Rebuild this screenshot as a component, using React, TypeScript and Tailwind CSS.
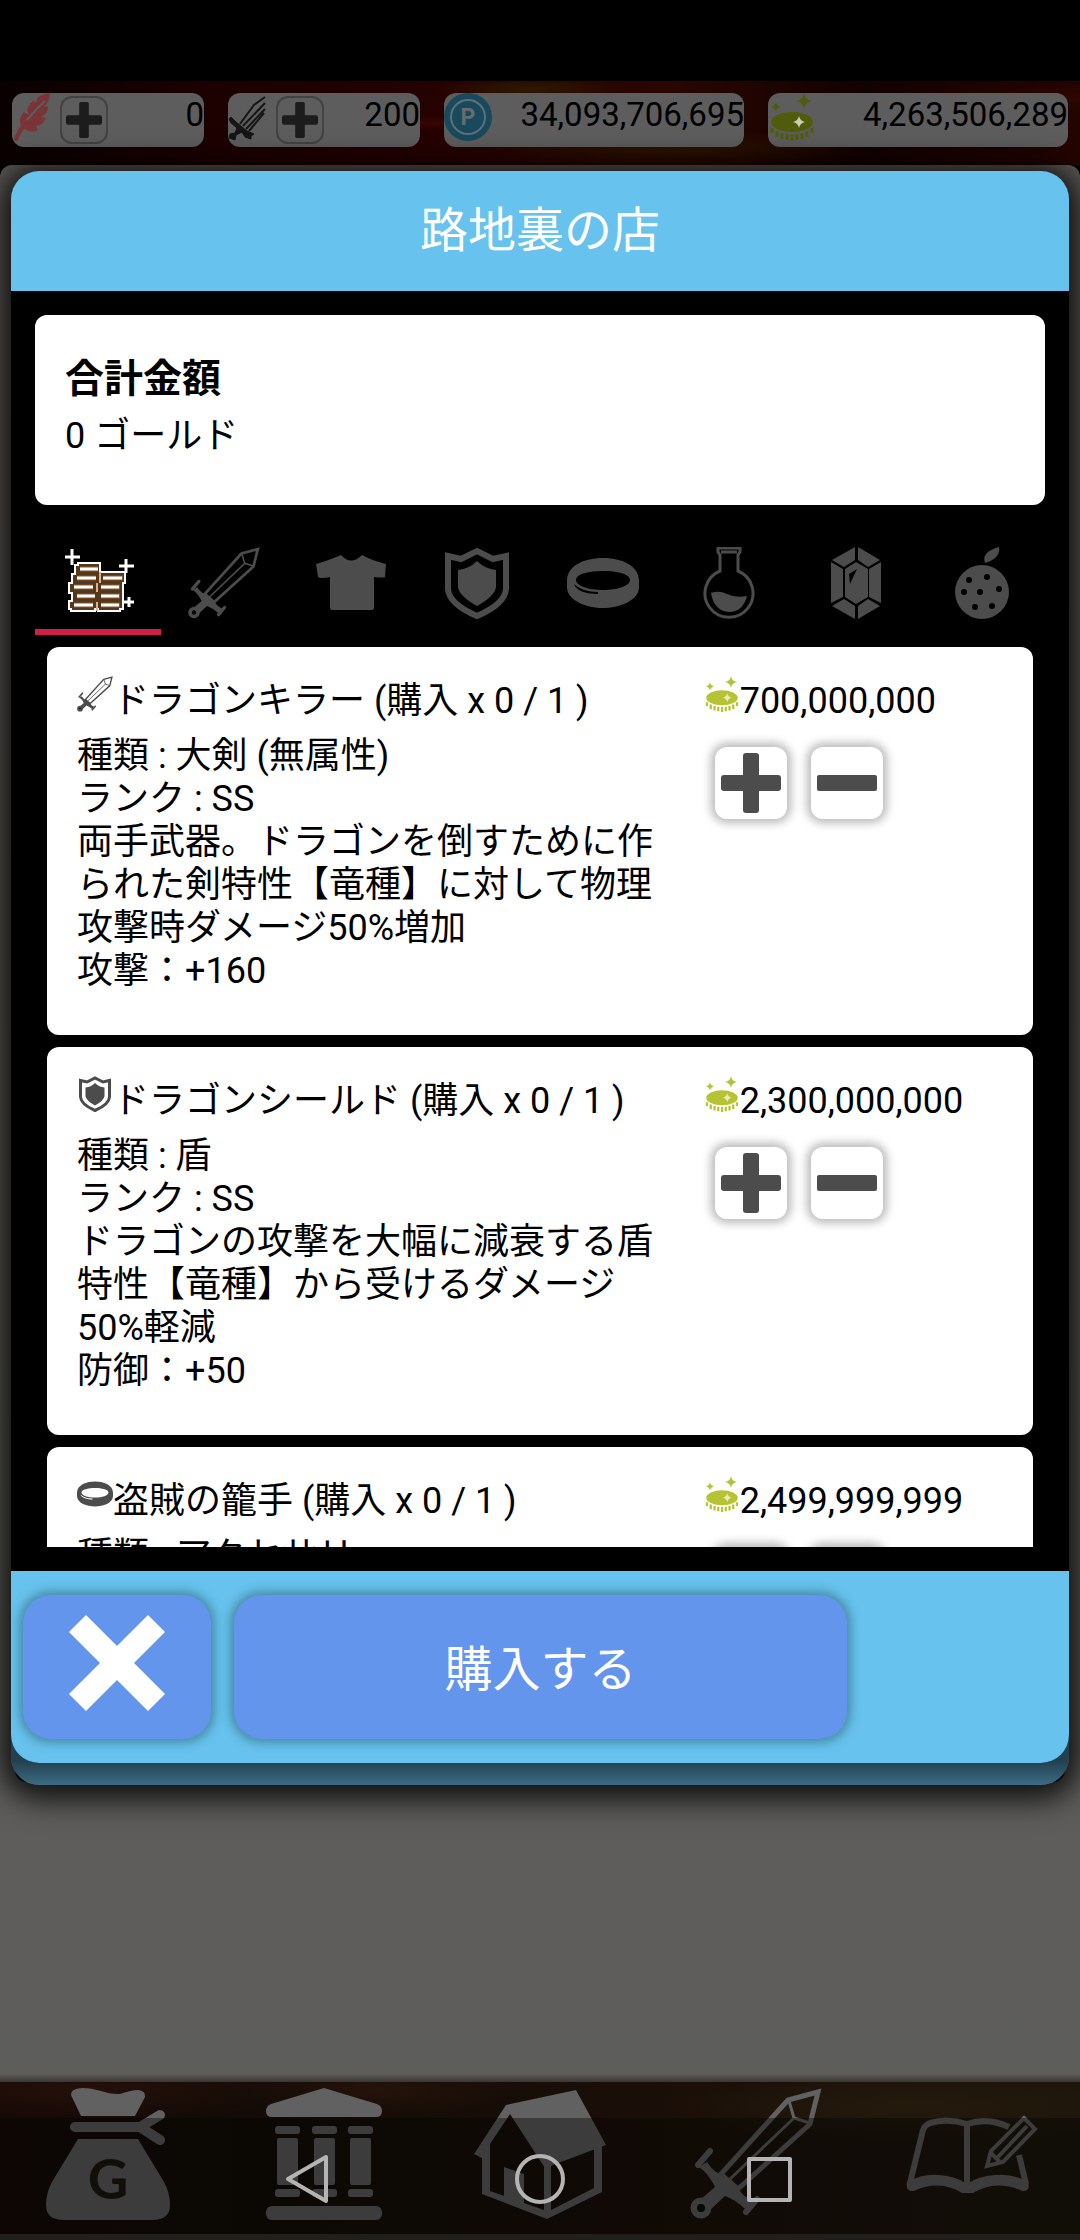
import { useState } from 'react'
import type { ReactNode } from 'react'

type IconProps = { className?: string }

const SwordIcon = ({ className }: IconProps) => (
	<svg viewBox="0 0 132 132" fill="none" stroke="currentColor" className={className}>
		<path d="M128 4 98 12 31 86 48 101 120 36Z" strokeWidth="5" />
		<path d="M99 13 104 30 120 35M104 30 38 93" strokeWidth="3" />
		<path
			d="M17 74Q24 85 33 87L49 101Q53 109 63 113L55 121Q46 112 35 108L20 122 10 112 25 99Q18 85 9 79Z"
			fill="currentColor"
			stroke="none"
		/>
		<path d="M20 63 8 77M67 111 56 124" strokeWidth="6" strokeLinecap="round" />
		<circle cx="11" cy="120" r="7" strokeWidth="7" />
		<circle cx="11" cy="120" r="4" fill="#0b0906" stroke="none" />
	</svg>
)

const DarkSwordIcon = ({ className }: IconProps) => (
	<svg viewBox="0 0 38 48" fill="none" stroke="currentColor" className={className}>
		<path d="M37 4 26 12 12 31M37 10 15 33M37 16 18 36M36 20 21 38" strokeWidth="2" />
		<path
			d="M3 24 8 29 19 38 26 41 23 43 23 46 17 44 14 39 8 42 7 47 1 45 2 41 7 40 9 35 3 30 1 26Z"
			fill="currentColor"
		/>
	</svg>
)

const ShirtIcon = ({ className }: IconProps) => (
	<svg viewBox="0 0 72 72" fill="currentColor" className={className}>
		<path d="M1 17Q12 14 26 8Q36 19 47 8Q58 14 71 17L70 30Q69 31 59 30V61Q59 63 57 63H17Q15 63 15 61V30Q5 32 3 30Z" />
	</svg>
)

const ShieldIcon = ({ className }: IconProps) => (
	<svg viewBox="0 0 72 72" fill="none" stroke="currentColor" className={className}>
		<path d="M7 9 20 12 36 4 52 12 65 9V42Q64 57 36 69Q8 57 7 42Z" strokeWidth="6" />
		<path d="M17 23Q28 22 36 14Q44 22 55 23V40Q54 49 36 59Q18 49 17 40Z" fill="currentColor" stroke="none" />
	</svg>
)

const RingIcon = ({ className }: IconProps) => (
	<svg viewBox="0 0 72 72" fill="currentColor" className={className}>
		<path
			fillRule="evenodd"
			d="M0 34C0 17 20 11 36 11S72 17 72 34V40C72 54 52 61 36 61S0 54 0 40ZM9 33C9 39 22 43 36 43S63 39 63 33 50 24 36 24 9 27 9 33ZM7 37C9 44 20 47 31 47L31 45C21 45 12 42 7 37Z"
		/>
	</svg>
)

const FlaskIcon = ({ className }: IconProps) => (
	<svg viewBox="0 0 72 72" fill="none" stroke="currentColor" className={className}>
		<path d="M25 1H47V5L45 8V24A24 24 0 1 1 27 24V8L25 5ZM28 5H44" strokeWidth="3" />
		<path d="M18 46Q26 43 34 47T54 49Q50 65 36 65Q21 64 18 46Z" fill="currentColor" stroke="none" />
	</svg>
)

const GemIcon = ({ className }: IconProps) => (
	<svg viewBox="0 0 72 72" fill="currentColor" className={className}>
		<path d="M35 0V13L24 20 12 13ZM38 0V13L48 20 60 13ZM11 15 23 22V50L11 56ZM61 15 49 22V50L61 56ZM35 72V59L24 52 12 59ZM38 72V59L48 52 60 59Z" />
		<path fillRule="evenodd" d="M36 15 48 22V50L36 57 25 50V22ZM37 22 29 27 30 37Z" />
	</svg>
)

const FruitIcon = ({ className }: IconProps) => (
	<svg viewBox="0 0 72 72" className={className}>
		<circle cx="36" cy="45" r="27" fill="currentColor" />
		<path d="M53 0Q55 11 39 16Q35 5 53 0Z" fill="currentColor" />
		<g fill="#000">
			<circle cx="23" cy="33" r="3" />
			<circle cx="41" cy="30" r="3" />
			<circle cx="18" cy="45" r="3" />
			<circle cx="34" cy="45" r="3" />
			<circle cx="53" cy="42" r="3" />
			<circle cx="29" cy="60" r="3" />
			<circle cx="46" cy="59" r="3" />
		</g>
	</svg>
)

const CoinStackIcon = ({ className }: IconProps) => (
	<svg viewBox="0 0 72 72" fill="none" stroke="#fff" strokeWidth="2" className={className}>
		<path
			d="M16 16H38V25H63V36H61V62H58V64H36V62H33V64H9V62H7V54H10V46H7V36H10V27H13V18H16Z"
			fill="#55371b"
		/>
		<path d="M38 25V36M35 36V45M35 55V64" stroke="#d9b48f" />
		<path
			d="M18 22H36M15 31H34M12 40H31M15 49H33M12 58H31M41 31H61M39 40H58M39 49H58M39 58H58"
			stroke="#86592f"
			strokeWidth="5"
		/>
		<path
			d="M18 22H36M15 31H34M12 40H31M15 49H33M12 58H31M41 31H60M39 40H57M39 49H57M39 58H57"
			strokeWidth="3"
		/>
		<path d="M10 2V18M3 10H18M64 12V26M57 19H72M67 50V60M62 55H72" strokeWidth="3" />
	</svg>
)

const GoldIcon = ({ className }: IconProps) => (
	<svg viewBox="0 0 48 48" fill="currentColor" className={className}>
		<ellipse cx="24" cy="29" rx="21" ry="10" />
		<path
			d="M4 35V40M9 38V44M14 40V46M19 41V47M24 41V48M29 41V47M34 40V46M39 38V44M44 35V40"
			fill="none"
			stroke="currentColor"
			strokeWidth="3"
		/>
		<path d="M36 0Q37 7 44 8Q37 9 36 16Q35 9 28 8Q35 7 36 0ZM8 9Q9 13 13 14Q9 15 8 19Q7 15 3 14Q7 13 8 9Z" />
		<path d="M31 23Q32 28 37 29Q32 30 31 35Q30 30 25 29Q30 28 31 23Z" className="fill-white/70" />
	</svg>
)

const FeatherIcon = ({ className }: IconProps) => (
	<svg viewBox="0 0 38 48" className={className}>
		<path
			d="M38 0Q30 1 25 5L24 10 21 8Q16 12 15 17L17 22 12 19Q7 25 8 31L10 34Q17 41 26 37L24 33Q31 32 34 25L29 24Q36 21 36 14L32 13Q38 9 38 0Z"
			fill="currentColor"
		/>
		<path d="M10 34Q18 22 33 8" fill="none" stroke="#5d5d5d" strokeWidth="2" />
		<path d="M4 46Q8 36 15 29" fill="none" stroke="currentColor" strokeWidth="4" strokeLinecap="round" />
	</svg>
)

const PointIcon = ({ className }: IconProps) => (
	<svg viewBox="0 0 48 48" className={className}>
		<circle cx="24" cy="24" r="24" fill="#18495c" />
		<circle cx="24" cy="24" r="17" fill="none" stroke="#5e7078" strokeWidth="2" />
		<text x="24" y="32" textAnchor="middle" fontSize="23" fontWeight="700" fontFamily="Roboto, sans-serif" fill="#666c70">
			P
		</text>
	</svg>
)

const PlusIcon = ({ className }: IconProps) => (
	<svg viewBox="0 0 60 60" fill="currentColor" className={className}>
		<rect x="22" width="16" height="60" rx="3" />
		<rect y="22" width="60" height="16" rx="3" />
	</svg>
)

const MinusIcon = ({ className }: IconProps) => (
	<svg viewBox="0 0 60 60" fill="currentColor" className={className}>
		<rect y="22" width="60" height="16" rx="2" />
	</svg>
)

const CloseIcon = ({ className }: IconProps) => (
	<svg viewBox="0 0 96 96" fill="currentColor" className={className}>
		<path d="M0 17 17 0 48 31 79 0 96 17 65 48 96 79 79 96 48 65 17 96 0 79 31 48Z" />
	</svg>
)

const BagIcon = ({ className }: IconProps) => (
	<svg viewBox="0 0 132 132" fill="currentColor" className={className}>
		<path d="M29 7Q28 1 40 0C56 0 66 7 78 6Q90 2 96 2Q104 3 103 9L93 28H39Z" />
		<path d="M33 39H98L118 27M98 39 118 52" fill="none" stroke="currentColor" strokeWidth="10" strokeLinecap="round" />
		<path d="M36 51H96L122 94Q128 105 128 117Q128 132 110 132H22Q4 132 4 117Q4 105 10 94Z" />
		<text x="66" y="111" textAnchor="middle" fontSize="56" fontWeight="700" fontFamily="Lato, sans-serif" fill="#1d140e">
			G
		</text>
	</svg>
)

const BankIcon = ({ className }: IconProps) => (
	<svg viewBox="0 0 132 132" fill="currentColor" className={className}>
		<path d="M66 0 119 16Q124 18 124 23Q124 29 118 29H14Q8 29 8 23Q8 18 13 16Z" />
		{[17, 54, 90].map((x) => (
			<g key={x}>
				<rect x={x} y="38" width="25" height="8" rx="3" />
				<rect x={x + 2} y="50" width="21" height="47" rx="2" />
				<rect x={x} y="101" width="25" height="8" rx="3" />
			</g>
		))}
		<rect x="8" y="118" width="116" height="14" rx="6" />
	</svg>
)

const HouseIcon = ({ className }: IconProps) => (
	<svg viewBox="0 0 132 132" fill="currentColor" className={className}>
		<path d="M32 17 102 2 132 57 71 80 36 26 16 56V103L70 122V76H77V122L120 100V60L128 57V104L73 131 8 106V70L0 66Z" />
		<path d="M30 79 50 86V118L30 110Z" />
	</svg>
)

const BookIcon = ({ className }: IconProps) => (
	<svg viewBox="0 0 132 132" fill="none" stroke="currentColor" className={className}>
		<path d="M61 36Q42 30 24 35Q19 37 17 42L4 95M61 36Q82 29 103 39M113 67 120 96M61 36V102" strokeWidth="6" />
		<path
			d="M1 94Q18 85 33 87Q50 88 61 96Q72 88 89 87Q106 85 122 94Q125 104 116 103Q96 94 78 100Q70 103 67 105H56Q50 101 45 100Q28 94 8 103Q-1 104 1 94Z"
			fill="currentColor"
			stroke="none"
		/>
		<path d="M118 30 129 41 97 74 81 78 85 63ZM85 65 94 74M121 38 92 69" strokeWidth="4" />
	</svg>
)

const TABS = [
	{ label: 'すべて', icon: CoinStackIcon },
	{ label: '武器', icon: SwordIcon },
	{ label: '防具', icon: ShirtIcon },
	{ label: '盾', icon: ShieldIcon },
	{ label: 'アクセサリー', icon: RingIcon },
	{ label: '薬', icon: FlaskIcon },
	{ label: '宝石', icon: GemIcon },
	{ label: '食料', icon: FruitIcon },
]

const ITEMS = [
	{
		name: 'ドラゴンキラー',
		icon: SwordIcon,
		price: 700000000,
		lines: [
			'種類 : 大剣 (無属性)',
			'ランク : SS',
			'両手武器。ドラゴンを倒すために作られた剣特性【竜種】に対して物理攻撃時ダメージ50%増加',
			'攻撃：+160',
		],
	},
	{
		name: 'ドラゴンシールド',
		icon: ShieldIcon,
		price: 2300000000,
		lines: [
			'種類 : 盾',
			'ランク : SS',
			'ドラゴンの攻撃を大幅に減衰する盾特性【竜種】から受けるダメージ50%軽減',
			'防御：+50',
		],
	},
	{
		name: '盗賊の籠手',
		icon: RingIcon,
		price: 2499999999,
		lines: ['種類 : アクセサリー'],
	},
]

const NAV = [
	{ label: '所持金', icon: BagIcon },
	{ label: '銀行', icon: BankIcon },
	{ label: '家', icon: HouseIcon },
	{ label: '戦闘', icon: SwordIcon },
	{ label: '日記', icon: BookIcon },
]

function Currency({ value, wide, children }: { value: string; wide?: boolean; children: ReactNode }) {
	return (
		<div
			className={`flex h-[54px] items-start overflow-hidden rounded-xl bg-[#5d5d5d] ${wide ? 'flex-[25]' : 'flex-[16]'}`}
		>
			{children}
			<p className="ml-auto text-[33px] leading-[44px]">{value}</p>
		</div>
	)
}

function AddButton({ label }: { label: string }) {
	return (
		<button
			aria-label={label}
			className="mt-[3px] ml-[10px] flex size-12 items-center justify-center rounded-xl border-2 border-[#434343] text-[#1c1c1c]"
		>
			<PlusIcon className="size-9" />
		</button>
	)
}

function ItemCard({
	item,
	count,
	onChange,
}: {
	item: (typeof ITEMS)[number]
	count: number
	onChange: (count: number) => void
}) {
	const button =
		'flex size-[72px] items-center justify-center rounded-xl bg-white text-[#4c4c4c] shadow-[0_0_10px_4px_rgba(0,0,0,0.28)]'

	return (
		<li className="grid shrink-0 grid-cols-[2fr_1fr] gap-7 rounded-xl bg-white px-[30px] pt-[33px] pb-[42px] text-4xl leading-[43px]">
			<div>
				<h2 className="mb-3 flex items-start leading-[43px]">
					<item.icon className="-mt-1 size-9 shrink-0 text-[#4c4c4c]" />
					{item.name} (購入 x {count} / 1 )
				</h2>
				{item.lines.map((line) => (
					<p key={line}>{line}</p>
				))}
			</div>

			<div>
				<p className="mb-6 flex items-start leading-[43px]">
					<GoldIcon className="-mt-1 size-9 shrink-0 text-[#b5c334]" />
					{item.price.toLocaleString('en-US')}
				</p>
				<div className="flex gap-6 pl-[11px]">
					<button aria-label="増やす" className={button} onClick={() => onChange(1)}>
						<PlusIcon className="size-[60px]" />
					</button>
					<button aria-label="減らす" className={button} onClick={() => onChange(0)}>
						<MinusIcon className="size-[60px]" />
					</button>
				</div>
			</div>
		</li>
	)
}

export default function App() {
	const [tab, setTab] = useState(0)
	const [counts, setCounts] = useState([0, 0, 0])

	const total = ITEMS.reduce((sum, item, i) => sum + item.price * counts[i], 0)
	const blueButton =
		'flex items-center justify-center rounded-[28px] bg-[#6495ed] text-white shadow-[0_0_10px_4px_rgba(40,90,100,0.5)]'

	return (
		<div className="relative flex min-h-screen flex-col bg-black font-['Roboto','Noto_Sans_CJK_JP',sans-serif] text-black">
			{/* game screen behind the dialog */}
			<header className="mt-[81px] flex gap-6 bg-[radial-gradient(ellipse_at_49%_10%,#301900_0%,transparent_12%),radial-gradient(ellipse_at_62%_80%,#2a1400_0%,transparent_20%),radial-gradient(ellipse_at_41%_50%,#380500_0%,transparent_12%),radial-gradient(ellipse_at_97%_20%,#300700_0%,transparent_12%),linear-gradient(90deg,#0a0000,#1c0000_18%,#250200_40%,#2a0600_62%,#120200_80%,#250400)] px-3 pt-3 pb-[18px]">
				<Currency value="0">
					<FeatherIcon className="h-12 w-[38px] text-[#7b3435]" />
					<AddButton label="羽を追加" />
				</Currency>
				<Currency value="200">
					<DarkSwordIcon className="h-12 w-[38px] text-[#151515]" />
					<AddButton label="剣を追加" />
				</Currency>
				<Currency value="34,093,706,695" wide>
					<PointIcon className="size-12" />
				</Currency>
				<Currency value="4,263,506,289" wide>
					<GoldIcon className="size-12 text-[#515c0b]" />
				</Currency>
			</header>
			<main className="flex-1 rounded-t-xl bg-[linear-gradient(#5c5a57,#5d5d5b)]" />
			<nav className="border-b-6 border-[#35312e] bg-[radial-gradient(ellipse_at_35%_10%,#24130a_0%,transparent_14%),radial-gradient(ellipse_at_8%_10%,#24100a_0%,transparent_16%),radial-gradient(ellipse_at_85%_20%,#241a0c_0%,transparent_20%),linear-gradient(90deg,#140806,#120b06_25%,#1a0e08_60%,#1c150c)]">
				<div className="h-2 bg-[linear-gradient(#5d5d5b,#3a3631)]" />
				<ul className="grid grid-cols-5 pt-[6px] pb-[14px]">
					{NAV.map(({ label, icon: Icon }) => (
						<li key={label} className="flex justify-center">
							<button aria-label={label}>
								<Icon className="size-[132px] text-[#616161]" />
							</button>
						</li>
					))}
				</ul>
			</nav>

			{/* shop dialog */}
			<div className="absolute inset-x-[11px] top-[171px] bottom-[455px] z-0 flex flex-col rounded-[28px] shadow-[0_4px_30px_10px_rgba(0,0,0,0.85)]">
				<div className="absolute inset-x-1 bottom-[3px] -z-10 h-10 rounded-xl bg-black" />
				<div className="flex min-h-0 flex-1 flex-col rounded-[28px] bg-[linear-gradient(to_top,#3b6c84,#23404f_24px)] pb-[22px]">
					<section
						role="dialog"
						aria-labelledby="shop-title"
						className="flex min-h-0 flex-1 flex-col overflow-hidden rounded-[28px] bg-black"
					>
						<h1
							id="shop-title"
							className="bg-[#67c2ee] text-center text-5xl leading-[120px] text-white"
						>
							路地裏の店
						</h1>

						<div className="flex min-h-0 flex-1 flex-col p-6">
							<div className="rounded-xl bg-white px-[30px] pt-[34px] pb-[42px]">
								<p className="text-[39px] leading-[60px] font-bold">合計金額</p>
								<p className="text-4xl leading-[54px]">{total.toLocaleString('en-US')} ゴールド</p>
							</div>

							<div role="tablist" className="mt-6 mb-3 grid grid-cols-8">
								{TABS.map(({ label, icon: Icon }, i) => (
									<button
										key={label}
										role="tab"
										aria-label={label}
										aria-selected={i === tab}
										onClick={() => setTab(i)}
										className={`flex justify-center border-b-6 pt-[18px] pb-[10px] text-[#4c4c4c] ${i === tab ? 'border-[#d01f44]' : 'border-transparent'}`}
									>
										<Icon className="size-[72px]" />
									</button>
								))}
							</div>

							<ul className="mx-3 flex min-h-0 flex-1 flex-col gap-3 overflow-y-auto [scrollbar-width:none]">
								{ITEMS.map((item, i) => (
									<ItemCard
										key={item.name}
										item={item}
										count={counts[i]}
										onChange={(count) => setCounts(counts.map((c, j) => (j === i ? count : c)))}
									/>
								))}
							</ul>
						</div>

						<footer className="flex gap-[23px] bg-[#67c2ee] px-3 py-6">
							<button aria-label="閉じる" className={`${blueButton} h-36 w-[188px]`}>
								<CloseIcon className="mb-2 size-24" />
							</button>
							<button className={`${blueButton} mr-[210px] h-36 flex-1 pt-1.5 text-5xl`}>購入する</button>
						</footer>
					</section>
				</div>
			</div>

			{/* system navigation */}
			<div className="absolute inset-x-0 bottom-0 z-10 grid h-[122px] grid-cols-[1fr_230px_230px_1fr] items-center bg-[#020403]/40 text-[#b5b4b4]">
				<button aria-label="戻る" className="-mr-[30px] justify-self-end">
					<svg viewBox="0 0 60 60" fill="none" stroke="currentColor" strokeWidth="4" strokeLinejoin="round" className="size-[60px]">
						<path d="M8 30 46 8V52Z" />
					</svg>
				</button>
				<button aria-label="ホーム" className="-mr-[30px] justify-self-end">
					<svg viewBox="0 0 60 60" fill="none" stroke="currentColor" strokeWidth="4" className="size-[60px]">
						<circle cx="30" cy="30" r="23" />
					</svg>
				</button>
				<button aria-label="履歴" className="-mr-[30px] justify-self-end">
					<svg viewBox="0 0 60 60" fill="none" stroke="currentColor" strokeWidth="4" strokeLinejoin="round" className="size-[60px]">
						<rect x="9" y="10" width="41" height="41" />
					</svg>
				</button>
			</div>
		</div>
	)
}
